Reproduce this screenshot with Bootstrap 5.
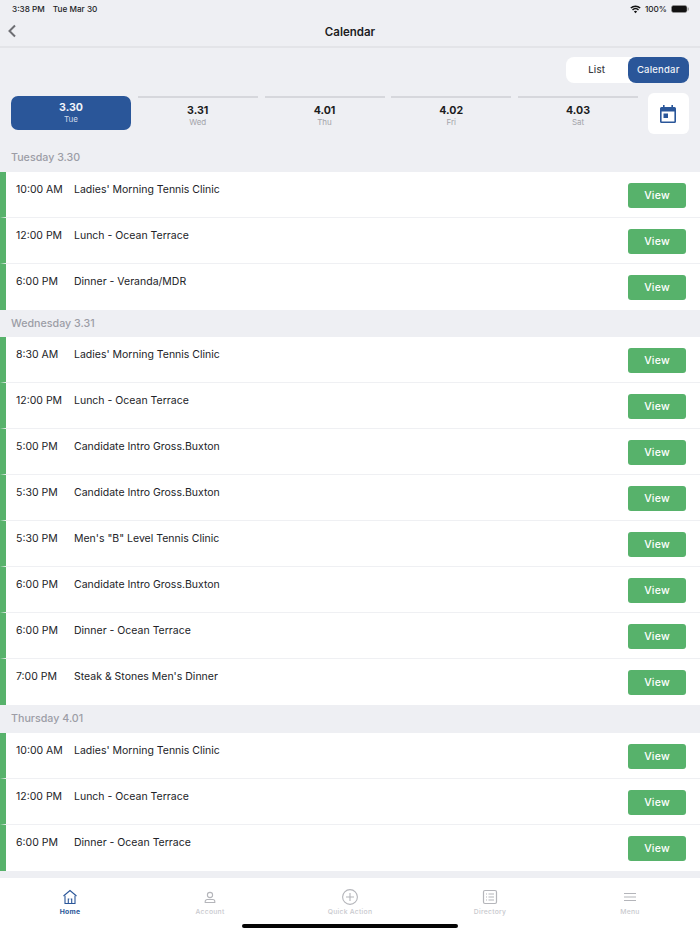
<!DOCTYPE html>
<html lang="en">
<head>
<meta charset="utf-8">
<title>Calendar</title>
<link href="https://cdn.jsdelivr.net/npm/bootstrap@5.3.0/dist/css/bootstrap.min.css" rel="stylesheet">
<style>
html,body{height:934px;overflow:hidden}
body{background:#eeeff3;font-family:Inter,"Liberation Sans",sans-serif;color:#1c1c1e;width:700px}
.app{height:934px;position:relative}
.stat{height:18px;padding:0 11px 0 12px;font-size:8.2px;font-weight:500;line-height:16px}
.topbar{height:30px;border-bottom:2px solid #e3e4e8;position:relative;font-size:11.5px;font-weight:600}
.topbar span{padding-top:2px}
.backbtn{position:absolute;left:7px;top:6px}
.seg{width:123px;height:26px;margin:9px 11px 0 auto;background:#fff;border-radius:8px}
.seg span{flex:1 1 0;font-size:9.5px;font-weight:500;letter-spacing:.2px;border-radius:8px;text-align:center;line-height:26px;color:#3a3b40}
.seg .on{background:#2a5699;color:#f0f3f8}
.strip{height:41px;margin-top:10px;padding:0 11px;gap:6.75px}
.dayc{width:120px;height:34px;margin-top:3px;border-top:2px solid #d6d7dc;text-align:center;font-size:10.6px;font-weight:700;line-height:12px;padding-top:7px;flex:none}
.dayc small{display:block;font-size:8px;font-weight:400;color:#a3a4aa;line-height:10px;margin-top:0}
.dayc.on{background:#2a5699;color:#f1f4f9;border:0;border-radius:7px;padding-top:6px}
.dayc.on small{color:#cfdaea;line-height:11px}
.calb{width:41px;height:41px;margin-left:3px;background:#fff;border-radius:6px;flex:none}
.sech{height:28px;padding-left:11px;font-size:10.7px;font-weight:500;color:#9c9da6;line-height:27px}
.secfirst{margin-top:10px}
.evt{height:46px;background:#fff;border-left:6px solid #57b26b;border-bottom:1px solid #eff0f3;padding:10px 14px 0 10px;font-size:10.5px;line-height:14px;color:#222327}
.evt:last-child{border-bottom:0}
.tm{width:58px;flex:none}
.tm,.ttl{padding-top:1px}
.vbtn{width:58px;height:25px;margin-top:1px;background:#57b26b;color:#fff;border:0;border-radius:3px;font-size:10.5px;font-weight:500;padding:1px 0 0;line-height:24px;letter-spacing:.2px}
.sec2{height:27px}
.tabs{position:absolute;left:0;right:0;top:878px;height:56px;background:#fff;padding-top:11px}
.tabi{flex:1 1 0;text-align:center;font-size:6.8px;font-weight:500;color:#c8c9ce;line-height:9px;letter-spacing:.25px}
.tabi svg{display:block;margin:0 auto 2px}
.tabi.on{color:#2a5699;font-weight:700}
.homebar{position:absolute;left:242px;top:924px;width:216px;height:4px;border-radius:2px;background:#050505}
</style>
</head>
<body>
<div class="app">
  <div class="stat d-flex align-items-center justify-content-between">
    <div class="d-flex gap-2"><span>3:38 PM</span><span>Tue Mar 30</span></div>
    <div class="d-flex align-items-center gap-1">
      <svg width="11" height="9" viewBox="0 0 11 9"><path d="M5.5 8.300 3.900 6.400a2.400 2.400 0 0 1 3.200 0zM3 5.400l-1-1.100a5.300 5.300 0 0 1 7 0L8 5.400a3.800 3.800 0 0 0-5 0zM1.300 3.500.3 2.400a7.900 7.900 0 0 1 10.400 0l-1 1.100a6.400 6.400 0 0 0-8.400 0z" fill="#111"/></svg>
      <span>100%</span>
      <svg width="18" height="8" viewBox="0 0 18 8"><rect x=".5" y=".5" width="15.500" height="7" rx="2" fill="#111" stroke="#999" stroke-width=".6"/><rect x="16.600" y="2.500" width="1.200" height="3" rx=".5" fill="#999"/></svg>
    </div>
  </div>
  <div class="topbar d-flex align-items-center justify-content-center">
    <svg class="backbtn" width="10" height="14" viewBox="0 0 10 14"><path d="M8 1.500 2.500 7 8 12.500" fill="none" stroke="#6d6e73" stroke-width="2"/></svg>
    <span>Calendar</span>
  </div>
  <div class="seg d-flex"><span>List</span><span class="on">Calendar</span></div>
  <div class="strip d-flex">
    <div class="dayc on">3.30<small>Tue</small></div>
    <div class="dayc">3.31<small>Wed</small></div>
    <div class="dayc">4.01<small>Thu</small></div>
    <div class="dayc">4.02<small>Fri</small></div>
    <div class="dayc">4.03<small>Sat</small></div>
    <div class="calb d-flex align-items-center justify-content-center">
      <svg width="16" height="18" viewBox="0 0 16 18"><path d="M3 0h1.600v2h6.800V0H13v2h1.500A1.500 1.500 0 0 1 16 3.500v13a1.500 1.500 0 0 1-1.500 1.500h-13A1.500 1.500 0 0 1 0 16.500v-13A1.500 1.500 0 0 1 1.500 2H3zM1.600 6.500v9.900h12.800V6.500z" fill="#2a5699"/><rect x="3.500" y="8.500" width="4.500" height="4.500" fill="#2a5699"/></svg>
    </div>
  </div>

  <div class="sech secfirst">Tuesday 3.30</div>
  <div>
    <div class="evt d-flex"><div class="tm">10:00 AM</div><div class="ttl flex-grow-1">Ladies' Morning Tennis Clinic</div><button class="vbtn" type="button">View</button></div>
    <div class="evt d-flex"><div class="tm">12:00 PM</div><div class="ttl flex-grow-1">Lunch - Ocean Terrace</div><button class="vbtn" type="button">View</button></div>
    <div class="evt d-flex"><div class="tm">6:00 PM</div><div class="ttl flex-grow-1">Dinner - Veranda/MDR</div><button class="vbtn" type="button">View</button></div>
  </div>

  <div class="sech sec2">Wednesday 3.31</div>
  <div>
    <div class="evt d-flex"><div class="tm">8:30 AM</div><div class="ttl flex-grow-1">Ladies' Morning Tennis Clinic</div><button class="vbtn" type="button">View</button></div>
    <div class="evt d-flex"><div class="tm">12:00 PM</div><div class="ttl flex-grow-1">Lunch - Ocean Terrace</div><button class="vbtn" type="button">View</button></div>
    <div class="evt d-flex"><div class="tm">5:00 PM</div><div class="ttl flex-grow-1">Candidate Intro Gross.Buxton</div><button class="vbtn" type="button">View</button></div>
    <div class="evt d-flex"><div class="tm">5:30 PM</div><div class="ttl flex-grow-1">Candidate Intro Gross.Buxton</div><button class="vbtn" type="button">View</button></div>
    <div class="evt d-flex"><div class="tm">5:30 PM</div><div class="ttl flex-grow-1">Men's "B" Level Tennis Clinic</div><button class="vbtn" type="button">View</button></div>
    <div class="evt d-flex"><div class="tm">6:00 PM</div><div class="ttl flex-grow-1">Candidate Intro Gross.Buxton</div><button class="vbtn" type="button">View</button></div>
    <div class="evt d-flex"><div class="tm">6:00 PM</div><div class="ttl flex-grow-1">Dinner - Ocean Terrace</div><button class="vbtn" type="button">View</button></div>
    <div class="evt d-flex"><div class="tm">7:00 PM</div><div class="ttl flex-grow-1">Steak &amp; Stones Men's Dinner</div><button class="vbtn" type="button">View</button></div>
  </div>

  <div class="sech">Thursday 4.01</div>
  <div>
    <div class="evt d-flex"><div class="tm">10:00 AM</div><div class="ttl flex-grow-1">Ladies' Morning Tennis Clinic</div><button class="vbtn" type="button">View</button></div>
    <div class="evt d-flex"><div class="tm">12:00 PM</div><div class="ttl flex-grow-1">Lunch - Ocean Terrace</div><button class="vbtn" type="button">View</button></div>
    <div class="evt d-flex"><div class="tm">6:00 PM</div><div class="ttl flex-grow-1">Dinner - Ocean Terrace</div><button class="vbtn" type="button">View</button></div>
  </div>

  <nav class="tabs d-flex">
    <div class="tabi on"><svg width="16" height="16" viewBox="0 0 16 16" fill="none" stroke="#2a5699" stroke-width="1.100"><path d="M1.500 7 8 1.500 14.500 7"/><path d="M3 6.800v7.700h10V6.800M6.300 14.500v-4.500h1M9.700 14.500v-4.500h-1"/></svg>Home</div>
    <div class="tabi"><svg width="16" height="16" viewBox="0 0 16 16" fill="none" stroke="#b4b5ba" stroke-width="1.100"><circle cx="8" cy="6" r="2.600"/><path d="M3.200 13.500v-1a2 2 0 0 1 2-2h5.600a2 2 0 0 1 2 2v1z"/></svg>Account</div>
    <div class="tabi"><svg width="16" height="16" viewBox="0 0 16 16" fill="none" stroke="#b4b5ba" stroke-width="1.100"><circle cx="8" cy="8" r="7.400"/><path d="M8 4v8M4 8h8"/></svg>Quick Action</div>
    <div class="tabi"><svg width="16" height="16" viewBox="0 0 16 16" fill="none" stroke="#b4b5ba" stroke-width="1.200"><rect x="1.500" y="1.500" width="13" height="13" rx="1.500"/><path d="M4 5h1M6.500 5H12M4 8h1M6.500 8H12M4 11h1M6.500 11H12"/></svg>Directory</div>
    <div class="tabi"><svg width="16" height="16" viewBox="0 0 16 16" fill="none" stroke="#b4b5ba" stroke-width="1.100"><path d="M2 4.500h12M2 8h12M2 11.500h12"/></svg>Menu</div>
  </nav>
  <div class="homebar"></div>
</div>
<script src="https://cdn.jsdelivr.net/npm/bootstrap@5.3.0/dist/js/bootstrap.bundle.min.js"></script>
</body>
</html>
